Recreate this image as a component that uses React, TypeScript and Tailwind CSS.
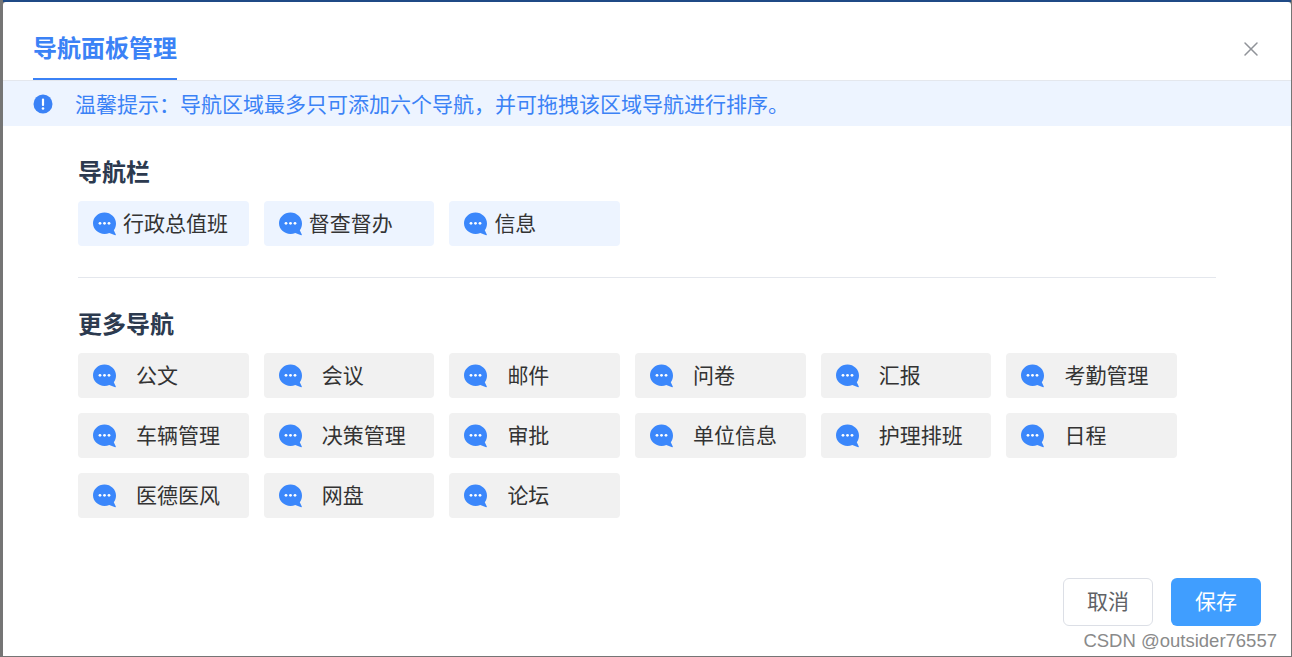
import React from "react";
import { X } from "lucide-react";

const mainNav = ["行政总值班", "督查督办", "信息"];
const moreNav = [
  "公文",
  "会议",
  "邮件",
  "问卷",
  "汇报",
  "考勤管理",
  "车辆管理",
  "决策管理",
  "审批",
  "单位信息",
  "护理排班",
  "日程",
  "医德医风",
  "网盘",
  "论坛",
];

const ChatIcon = () => (
  <svg width="24" height="24" viewBox="0 0 24 24" className="shrink-0">
    <path
      d="M11.500 0.500C5.200 0.500 0 5.400 0 11.300S5.200 22 11.500 22c1.700 0 3.300-.3 4.800-1l5.900 2.300c.5.100.8-.2.600-.7l-2-4.300c1.500-1.900 2.200-4.200 2.200-6.700C23 5.400 17.800.5 11.500.5z"
      fill="#3b87fb"
    />
    <circle cx="7" cy="11.300" r="1.400" fill="#fff" />
    <circle cx="11.500" cy="11.300" r="1.400" fill="#fff" />
    <circle cx="16" cy="11.300" r="1.400" fill="#fff" />
  </svg>
);

const App: React.FC = () => {
  return (
    <div className="relative h-[657px] w-[1292px] overflow-hidden bg-[#757575] pb-px pl-[3px] pr-px font-['Noto_Sans_CJK_SC','Liberation_Sans',sans-serif]">
      <div className="h-[2px] bg-[#1f4a86]" />
      <div className="flex h-[654px] flex-col rounded-t-[3px] bg-white">
        {/* header */}
        <div className="flex h-[79px] items-start justify-between border-b border-[#e4e7ed] pl-[30px] pr-[30px]">
          <div className="flex h-[78px] items-center border-b-2 border-[#3b82f6] pt-[13px] text-[24px] leading-none font-bold text-[#3b82f6]">
            导航面板管理
          </div>
          <X size={24} strokeWidth={1.5} className="mt-[35px] -mr-[2px] text-[#909399]" />
        </div>

        {/* tip */}
        <div className="flex h-[45px] items-center bg-[#edf4ff] pl-[30px] text-[21px] text-[#3b82f6]">
          <svg width="20" height="20" viewBox="0 0 20 20" className="shrink-0">
            <circle cx="10" cy="10" r="9.500" fill="#3b82f6" />
            <rect x="8.900" y="4.500" width="2.200" height="7.500" rx="1" fill="#fff" />
            <circle cx="10" cy="14.500" r="1.300" fill="#fff" />
          </svg>
          <span className="ml-[22px] leading-none">
            温馨提示：导航区域最多只可添加六个导航，并可拖拽该区域导航进行排序。
          </span>
        </div>

        {/* content */}
        <div className="w-[1213px] pl-[75px] pt-[30px]">
          <h3 className="text-[24px] leading-[30px] font-semibold text-[#2c3a4f]">导航栏</h3>
          <div className="mt-[15px] grid grid-cols-[repeat(6,170.700px)] gap-x-[15px] gap-y-[15px] border-b border-[#e4e7ed] pb-[31px]">
            {mainNav.map((name) => (
              <div
                key={name}
                className="flex h-[45px] items-center rounded-[4px] bg-[#edf4ff] pl-[15px] text-[21px] text-[#333]"
              >
                <ChatIcon />
                <span className="mb-[2px] ml-[6px] leading-none">{name}</span>
              </div>
            ))}
          </div>

          <h3 className="mt-[30px] text-[24px] leading-[30px] font-semibold text-[#2c3a4f]">更多导航</h3>
          <div className="mt-[15px] grid grid-cols-[repeat(6,170.700px)] gap-x-[15px] gap-y-[15px]">
            {moreNav.map((name) => (
              <div
                key={name}
                className="flex h-[45px] items-center rounded-[4px] bg-[#f1f1f1] pl-[15px] text-[21px] text-[#333]"
              >
                <ChatIcon />
                <span className="mb-[2px] ml-[19px] leading-none">{name}</span>
              </div>
            ))}
          </div>
        </div>

        {/* footer */}
        <div className="mt-[60px] flex justify-end gap-[18px] pr-[30px]">
          <button className="h-[48px] w-[90px] rounded-[6px] border border-[#dcdfe6] bg-white pb-[2px] text-[21px] text-[#606266]">
            取消
          </button>
          <button className="h-[48px] w-[90px] rounded-[6px] bg-[#409eff] pb-[2px] text-[21px] text-white">
            保存
          </button>
        </div>
      </div>
      <span className="absolute bottom-[5px] right-[15px] font-['Liberation_Sans',sans-serif] text-[18.500px] leading-[22px] text-[#8a8a8a]">
        CSDN @outsider76557
      </span>
    </div>
  );
};

export default App;
